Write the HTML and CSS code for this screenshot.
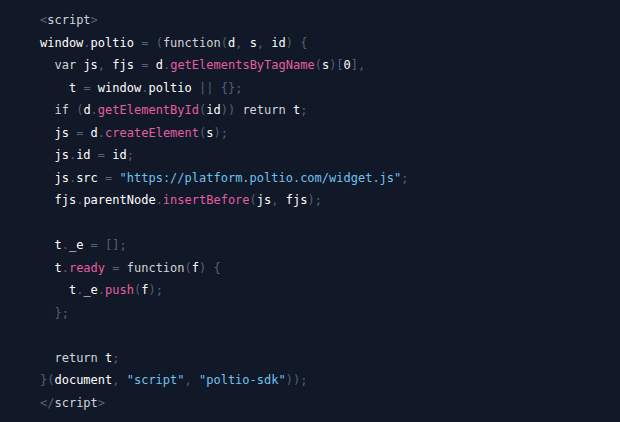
FILE: index.html
```html
<!DOCTYPE html>
<html>
<head>
<meta charset="utf-8">
<link rel="stylesheet" href="styles.css">
</head>
<body>
<pre class="code"><code><span class="p">&lt;</span><span class="k">script</span><span class="p">&gt;</span>
<span class="i">window</span><span class="p">.</span><span class="i">poltio</span> <span class="p">=</span> <span class="p">(</span><span class="k">function</span><span class="p">(</span><span class="i">d</span><span class="p">,</span> <span class="i">s</span><span class="p">,</span> <span class="i">id</span><span class="p">)</span> <span class="p">{</span>
  <span class="k">var</span> <span class="i">js</span><span class="p">,</span> <span class="i">fjs</span> <span class="p">=</span> <span class="i">d</span><span class="p">.</span><span class="m">getElementsByTagName</span><span class="p">(</span><span class="i">s</span><span class="p">)[</span><span class="i">0</span><span class="p">],</span>
    <span class="i">t</span> <span class="p">=</span> <span class="i">window</span><span class="p">.</span><span class="i">poltio</span> <span class="p">||</span> <span class="p">{};</span>
  <span class="k">if</span> <span class="p">(</span><span class="i">d</span><span class="p">.</span><span class="m">getElementById</span><span class="p">(</span><span class="i">id</span><span class="p">))</span> <span class="k">return</span> <span class="i">t</span><span class="p">;</span>
  <span class="i">js</span> <span class="p">=</span> <span class="i">d</span><span class="p">.</span><span class="m">createElement</span><span class="p">(</span><span class="i">s</span><span class="p">);</span>
  <span class="i">js</span><span class="p">.</span><span class="i">id</span> <span class="p">=</span> <span class="i">id</span><span class="p">;</span>
  <span class="i">js</span><span class="p">.</span><span class="i">src</span> <span class="p">=</span> <span class="s">"https://platform.poltio.com/widget.js"</span><span class="p">;</span>
  <span class="i">fjs</span><span class="p">.</span><span class="i">parentNode</span><span class="p">.</span><span class="m">insertBefore</span><span class="p">(</span><span class="i">js</span><span class="p">,</span> <span class="i">fjs</span><span class="p">);</span>

  <span class="i">t</span><span class="p">.</span><span class="i">_e</span> <span class="p">=</span> <span class="p">[];</span>
  <span class="i">t</span><span class="p">.</span><span class="m">ready</span> <span class="p">=</span> <span class="k">function</span><span class="p">(</span><span class="i">f</span><span class="p">)</span> <span class="p">{</span>
    <span class="i">t</span><span class="p">.</span><span class="i">_e</span><span class="p">.</span><span class="m">push</span><span class="p">(</span><span class="i">f</span><span class="p">);</span>
  <span class="p">};</span>

  <span class="k">return</span> <span class="i">t</span><span class="p">;</span>
<span class="p">}(</span><span class="i">document</span><span class="p">,</span> <span class="s">"script"</span><span class="p">,</span> <span class="s">"poltio-sdk"</span><span class="p">));</span>
<span class="p">&lt;/</span><span class="k">script</span><span class="p">&gt;</span></code></pre>
</body>
</html>
```

FILE: styles.css
```css
html, body {
  margin: 0;
  padding: 0;
  background: #111827;
  height: 100%;
}
.code {
  margin: 0;
  padding: 9px 0 0 40px;
  font-family: "DejaVu Sans Mono", "Liberation Mono", monospace;
  font-size: 12px;
  line-height: 22.5px;
  color: #e5e7eb;
}
.p { color: #566172; }
.k { color: #d1d5db; }
.i { color: #ffffff; }
.m { color: #e35ea3; }
.s { color: #6fc3ef; }
```
